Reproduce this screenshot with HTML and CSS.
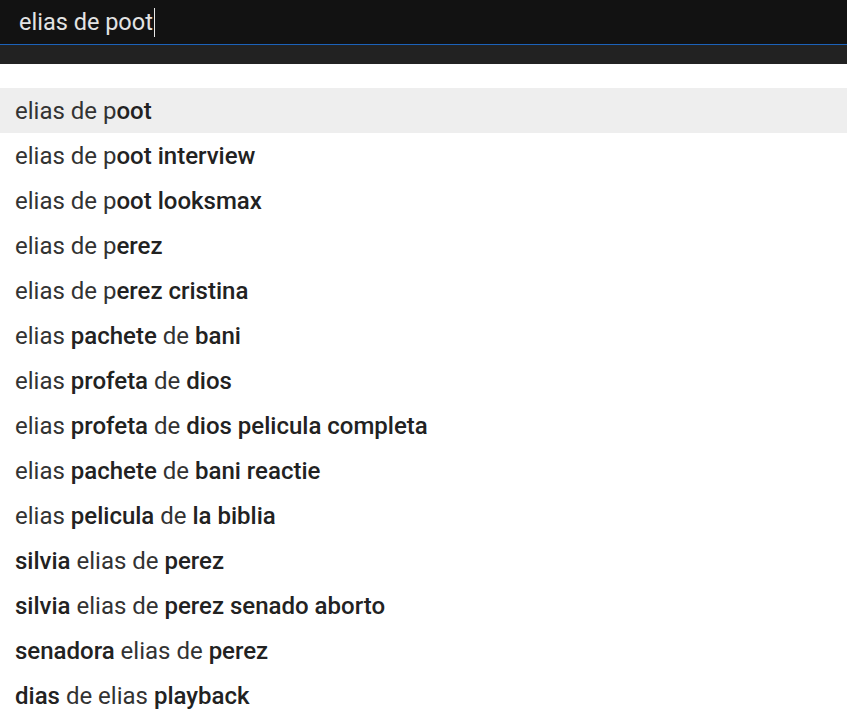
FILE: index.html
```html
<!DOCTYPE html>
<html>
<head>
<meta charset="utf-8">
<link rel="stylesheet" href="styles.css">
</head>
<body>
<div class="top">
  <div class="search"><span class="query">elias de poot</span><span class="caret"></span></div>
  <div class="band"></div>
</div>
<ul class="list">
  <li class="item active">elias de p<b>oot</b></li>
  <li class="item">elias de p<b>oot interview</b></li>
  <li class="item">elias de p<b>oot looksmax</b></li>
  <li class="item">elias de p<b>erez</b></li>
  <li class="item">elias de p<b>erez cristina</b></li>
  <li class="item">elias <b>pachete</b> de <b>bani</b></li>
  <li class="item">elias <b>profeta</b> de <b>dios</b></li>
  <li class="item">elias <b>profeta</b> de <b>dios pelicula completa</b></li>
  <li class="item">elias <b>pachete</b> de <b>bani reactie</b></li>
  <li class="item">elias <b>pelicula</b> de <b>la biblia</b></li>
  <li class="item"><b>silvia</b> elias de <b>perez</b></li>
  <li class="item"><b>silvia</b> elias de <b>perez senado aborto</b></li>
  <li class="item"><b>senadora</b> elias de <b>perez</b></li>
  <li class="item"><b>dias</b> de elias <b>playback</b></li>
</ul>
</body>
</html>
```

FILE: styles.css
```css
html, body {
  margin: 0;
  padding: 0;
  background: #ffffff;
  font-family: Roboto, "Noto Sans", Arial, sans-serif;
  overflow: hidden;
}
.top {
  background: #222222;
}
.search {
  height: 45px;
  box-sizing: border-box;
  background: #121212;
  border-bottom: 1px solid #1c62b9;
  display: flex;
  align-items: center;
  padding-left: 19px;
  color: #e3e3e3;
  font-size: 23.5px;
}
.caret {
  display: inline-block;
  width: 1px;
  height: 29px;
  background: #e8e8e8;
  margin-left: 1px;
}
.band {
  height: 19px;
}
.list {
  list-style: none;
  margin: 0;
  padding: 24px 0 0 0;
}
.item {
  height: 45px;
  display: flex;
  align-items: center;
  padding-left: 15px;
  font-size: 24px;
  color: #333333;
  white-space: pre;
}
.item b {
  font-weight: 500;
  color: #222222;
}
.item.active {
  background: #eeeeee;
}
```
